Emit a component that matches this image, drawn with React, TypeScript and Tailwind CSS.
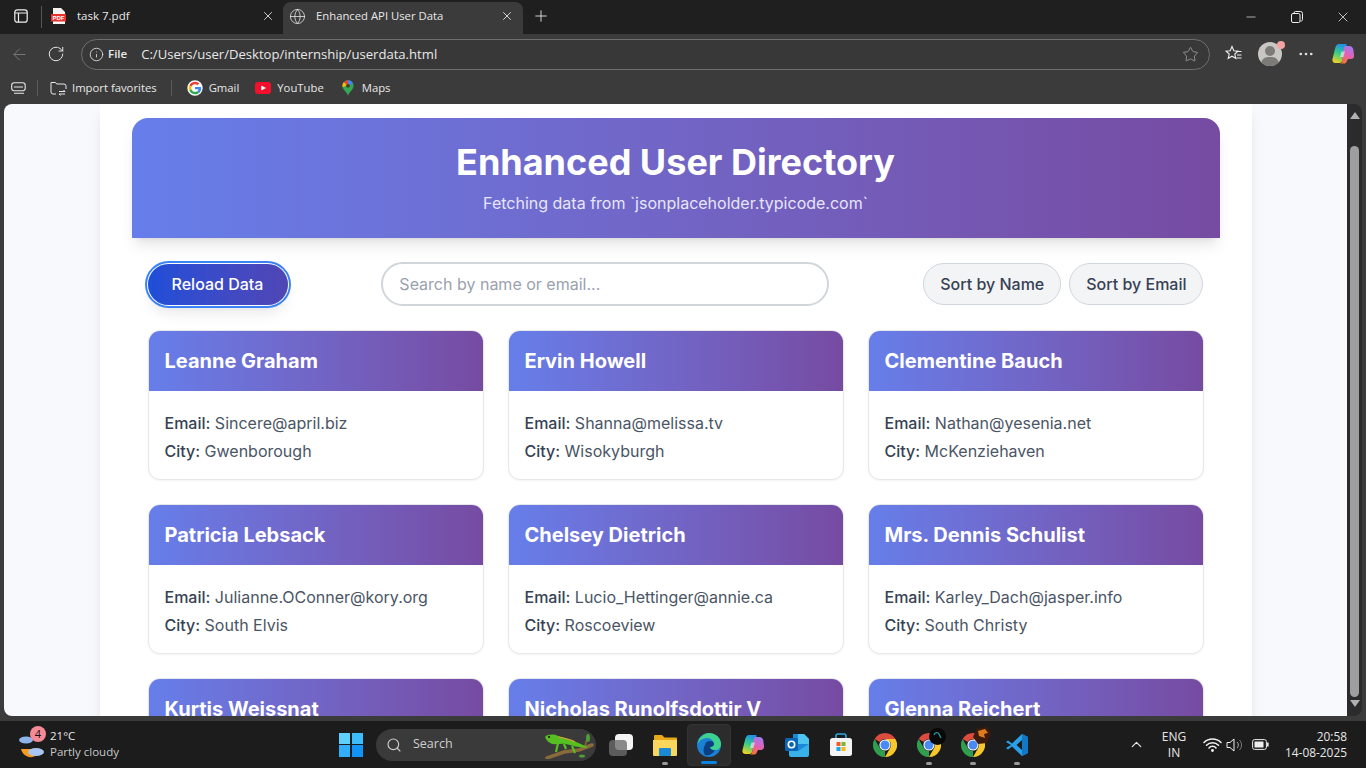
import React, { useId } from "react";
import { ArrowLeft, RotateCw, Info, Star, Search, ChevronUp, Minus, X, Plus, Globe, MoreHorizontal } from "lucide-react";

const UI = "font-['Open_Sans','Noto_Sans',sans-serif]";

const users = [
  ["Leanne Graham", "Sincere@april.biz", "Gwenborough"],
  ["Ervin Howell", "Shanna@melissa.tv", "Wisokyburgh"],
  ["Clementine Bauch", "Nathan@yesenia.net", "McKenziehaven"],
  ["Patricia Lebsack", "Julianne.OConner@kory.org", "South Elvis"],
  ["Chelsey Dietrich", "Lucio_Hettinger@annie.ca", "Roscoeview"],
  ["Mrs. Dennis Schulist", "Karley_Dach@jasper.info", "South Christy"],
  ["Kurtis Weissnat", "Telly.Hoeger@billy.biz", "Howemouth"],
  ["Nicholas Runolfsdottir V", "Sherwood@rosamond.me", "Aliyaview"],
  ["Glenna Reichert", "Chaim_McDermott@dana.io", "Bartholomebury"],
];

function Chrome({ size = 22 }: { size?: number }) {
  return (
    <svg width={size} height={size} viewBox="0 0 24 24">
      <path d="M12 0a12 12 0 0 1 10.4 6H12a6 6 0 0 0-5.200 3L1.600 6A12 12 0 0 1 12 0z" fill="#dd4b3e" />
      <path d="M22.400 6A12 12 0 0 1 12 24l5.200-9A6 6 0 0 0 17.200 9L12 6z" fill="#f8c72c" />
      <path d="M12 24A12 12 0 0 1 1.600 6l5.200 9A6 6 0 0 0 12 18z" fill="#2f9e4f" />
      <circle cx="12" cy="12" r="5.600" fill="#fff" />
      <circle cx="12" cy="12" r="4.500" fill="#4a8af4" />
    </svg>
  );
}

function Copilot({ size = 22 }: { size?: number }) {
  const id = useId();
  return (
    <svg width={size} height={size} viewBox="0 0 24 24">
      <defs>
        <linearGradient id={id + "a"} x1="0.6" y1="0" x2="0.3" y2="1">
          <stop offset="0" stopColor="#1f8fe8" />
          <stop offset="0.5" stopColor="#35cf86" />
          <stop offset="1" stopColor="#f6d21e" />
        </linearGradient>
        <linearGradient id={id + "b"} x1="0.7" y1="0" x2="0.3" y2="1">
          <stop offset="0" stopColor="#9f7cf0" />
          <stop offset="0.5" stopColor="#e35fb5" />
          <stop offset="1" stopColor="#f5742c" />
        </linearGradient>
      </defs>
      <path d="M8 2h6.500c1 0 1.300.5 1 1.500L11 19c-.5 1.500-1.500 2-3 2H4.500C2 21 1 19 1.500 17L4 7C4.500 4 6 2 8 2z" fill={`url(#${id}a)`} />
      <path d="M13 5.500c.3-1 .8-1.500 2-1.500h3.500c2 0 3.300 1.500 3.800 3.500l.7 5c.5 3-1 4.500-3 4.500h-3l-1.500 3c-.5 1-1.500 1.500-2.500 1.500H8c1.500 0 2.600-.6 3-1.800z" fill={`url(#${id}b)`} />
      <path d="M10.500 9.500h3.500l-1.600 5.500H9z" fill="#fff" fillOpacity="0.55" />
    </svg>
  );
}

function GoogleG() {
  return (
    <svg width="16" height="16" viewBox="0 0 48 48">
      <circle cx="24" cy="24" r="23" fill="#fff" />
      <path fill="#EA4335" d="M24 12.500c3.200 0 5.600 1.100 7.500 2.900l5.500-5.500C33.600 6.700 29.200 5 24 5 16.600 5 10.200 9.200 7.100 15.400l6.400 5c1.500-4.600 5.700-7.900 10.500-7.900z" />
      <path fill="#4285F4" d="M42.500 24.500c0-1.400-.1-2.400-.4-3.500H24v7h10.500c-.5 2.500-1.900 4.600-4.100 6l6.300 4.900c3.700-3.500 5.800-8.500 5.800-14.400z" />
      <path fill="#FBBC05" d="M13.500 28.600A11.600 11.600 0 0 1 13.500 20.400l-6.400-5a19 19 0 0 0 0 17.200z" />
      <path fill="#34A853" d="M24 43c5.200 0 9.500-1.700 12.700-4.600l-6.300-4.900c-1.700 1.200-3.900 2-6.400 2-4.800 0-8.900-3.200-10.500-7.900l-6.400 5C10.200 38.800 16.600 43 24 43z" />
    </svg>
  );
}

function Gecko() {
  return (
    <svg width="50" height="28" viewBox="0 0 50 28">
      <path d="M3 27 L20 21 L35 19 L48 14" stroke="#8a6a3a" strokeWidth="3.500" fill="none" strokeLinecap="round" />
      <path d="M41 15 L44 4" stroke="#8a6a3a" strokeWidth="1.500" />
      <ellipse cx="44" cy="7" rx="2" ry="4" fill="#4f9c3a" />
      <ellipse cx="38" cy="25" rx="3" ry="1.500" fill="#4f9c3a" />
      <path d="M1 6 C4 3 10 3 14 5 C20 7 26 8 32 11 C36 13 41 14 44 17 C38 16 32 16 26 14 C20 12 16 13 12 13 C8 14 3 11 1 6z" fill="#56c021" />
      <path d="M14 6 C20 7 26 8 31 11" stroke="#d9a03f" strokeWidth="1.200" fill="none" />
      <path d="M14 12 L12 21 M28 15 L31 22 M20 13 L22 18" stroke="#56c021" strokeWidth="2.200" />
      <circle cx="5" cy="6" r="1" fill="#111" />
    </svg>
  );
}

function Card({ u }: { u: string[] }) {
  return (
    <div className="rounded-xl border border-gray-200 bg-white shadow-[0_1px_2px_rgba(0,0,0,0.05)] overflow-hidden">
      <div className="h-[60px] flex items-center px-4 bg-gradient-to-r from-[#667eea] to-[#764ba2]">
        <h2 className="text-xl font-bold text-white">{u[0]}</h2>
      </div>
      <div className="px-4 pt-[18px] pb-[14px] text-base leading-7 text-gray-600">
        <p><span className="font-medium text-gray-700">Email:</span> {u[1]}</p>
        <p><span className="font-medium text-gray-700">City:</span> {u[2]}</p>
      </div>
    </div>
  );
}

function TaskIcon({ children, dot, active }: { children: React.ReactNode; dot?: boolean; active?: boolean }) {
  return (
    <div className={`relative w-11 h-[42px] flex items-center justify-center rounded ${active ? "bg-[#2c2c2c] border border-[#333]" : ""}`}>
      {children}
      {dot && <div className="absolute bottom-[1px] left-1/2 -translate-x-1/2 w-[6px] h-[3px] rounded-full bg-[#9a9a9a]" />}
      {active && <div className="absolute bottom-[1px] left-1/2 -translate-x-1/2 w-4 h-[3px] rounded-full bg-[#0a84e0]" />}
    </div>
  );
}

export default function App() {
  return (
    <div className="h-[768px] w-[1366px] overflow-hidden flex flex-col bg-[#3b3b3b] font-['Inter',sans-serif]">
      {/* tab strip */}
      <div className={`h-[34px] shrink-0 bg-[#1f1f1f] flex items-end text-[#e8e8e8] text-[11.500px] ${UI}`}>
        <div className="w-[41px] h-full flex items-center justify-center pb-[2px]">
          <svg width="14" height="14" viewBox="0 0 14 14" fill="none" stroke="#f0f0f0" strokeWidth="1.200">
            <rect x="0.800" y="0.800" width="12.400" height="12.400" rx="2.500" />
            <path d="M0.800 4h12.400M4.500 4v9" />
          </svg>
        </div>
        <div className="w-px h-[22px] bg-[#555] self-center" />
        <div className="w-[241px] h-full flex items-center pl-[9px] pr-[8px] pb-[2px]">
          <svg width="15" height="16" viewBox="0 0 15 16" className="shrink-0">
            <path d="M2 0h8l4 4v12H2z" fill="#f4f4f4" />
            <rect x="0" y="6" width="15" height="7.500" fill="#e8312f" />
            <text x="7.500" y="12" textAnchor="middle" fontSize="6" fontWeight="700" fill="#fff" fontFamily="Liberation Sans">PDF</text>
          </svg>
          <span className="ml-[11px] flex-1">task 7.pdf</span>
          <X size={14} strokeWidth={1.500} />
        </div>
        <div className="w-[240px] h-[32px] rounded-t-lg bg-[#3b3b3b] flex items-center pl-[6px] pr-[9px] pb-[4px]">
          <Globe size={17} strokeWidth={1.100} className="shrink-0" />
          <span className="ml-[10px] flex-1 text-[11.300px]">Enhanced API User Data</span>
          <X size={14} strokeWidth={1.500} />
        </div>
        <div className="w-[36px] h-full flex items-center justify-center pb-[3px]">
          <Plus size={18} strokeWidth={1.200} />
        </div>
        <div className="flex-1" />
        <div className="h-full flex items-center">
          <div className="w-[46px] flex justify-center"><Minus size={14} strokeWidth={1.200} /></div>
          <div className="w-[46px] flex justify-center">
            <svg width="12" height="12" viewBox="0 0 12 12" fill="none" stroke="#eee" strokeWidth="1">
              <rect x="0.500" y="2.500" width="8.500" height="9" rx="1.500" />
              <path d="M3 2.500V2a1.500 1.500 0 0 1 1.500-1.500h5A2 2 0 0 1 11.500 2.500v6A1.500 1.500 0 0 1 9.500 10" />
            </svg>
          </div>
          <div className="w-[46px] flex justify-center"><X size={16} strokeWidth={1.200} /></div>
        </div>
      </div>

      {/* toolbar */}
      <div className={`h-[38px] pt-[2px] shrink-0 flex items-center text-[#e8e8e8] ${UI}`}>
        <div className="w-[38px] flex justify-center"><ArrowLeft size={19} strokeWidth={1.200} className="text-[#7a7a7a]" /></div>
        <div className="w-[36px] flex justify-center"><RotateCw size={18} strokeWidth={1.300} /></div>
        <div className="ml-[7px] w-[1129px] h-[31px] rounded-full border border-[#6e6e6e] bg-[#383838] flex items-center pl-[7px] pr-[10px]">
          <Info size={15} strokeWidth={1.300} />
          <span className="ml-[4px] text-[11.500px] font-semibold">File</span>
          <span className="ml-[14px] mt-[1px] text-[13.100px] flex-1">C:/Users/user/Desktop/internship/userdata.html</span>
          <Star size={17} strokeWidth={1.100} className="text-[#a8a8a8]" />
        </div>
        <div className="w-[48px] flex justify-center">
          <svg width="18" height="18" viewBox="0 0 18 18" fill="none" stroke="#eee" strokeWidth="1.100">
            <path d="M7 1.500l1.800 4.200 4.200.4-3.200 2.900 1 4.300L7 11.200l-3.800 2.100 1-4.300L1 6.100l4.200-.4z" />
            <path d="M11.500 6.500h5M12 10h4.500M11.500 13h5" />
          </svg>
        </div>
        <div className="relative w-[24px] h-[24px] rounded-full bg-[#c9c7c3] overflow-hidden">
          <div className="absolute left-[7px] top-[4px] w-[10px] h-[10px] rounded-full bg-[#7d7b78]" />
          <div className="absolute left-[3px] top-[15px] w-[18px] h-[14px] rounded-full bg-[#7d7b78]" />
        </div>
        <div className="relative -ml-[5px] -mt-[18px] w-[8px] h-[8px] rounded-full bg-[#f5a3a3]" />
        <div className="w-[36px] ml-[3px] flex justify-center"><MoreHorizontal size={18} strokeWidth={1.500} /></div>
        <div className="w-[38px] flex justify-center"><Copilot size={24} /></div>
      </div>

      {/* favorites bar */}
      <div className={`h-[32px] shrink-0 flex items-center text-[11.300px] text-[#e8e8e8] ${UI}`}>
        <div className="w-[37px] flex justify-center">
          <svg width="16" height="12" viewBox="0 0 16 12" fill="none" stroke="#e8e8e8" strokeWidth="1.100">
            <rect x="0.700" y="0.700" width="13.500" height="8" rx="2.500" />
            <path d="M3 5h9M3 11.200h10" />
          </svg>
        </div>
        <div className="w-px h-[16px] bg-[#5a5a5a]" />
        <svg width="17" height="16" viewBox="0 0 17 16" fill="none" stroke="#e8e8e8" strokeWidth="1" className="ml-[12px]">
          <path d="M6 14H3a2 2 0 0 1-2-2V2.500h4.500l1.200 1.500H14a2 2 0 0 1 2 2v3" />
          <path d="M9 11.500h6l-1.500-1.500M15 14H9l1.500 1.500" />
        </svg>
        <span className="ml-[5px]">Import favorites</span>
        <div className="ml-[14px] w-px h-[16px] bg-[#5a5a5a]" />
        <div className="ml-[15px]"><GoogleG /></div>
        <span className="ml-[6px]">Gmail</span>
        <svg width="16" height="12" viewBox="0 0 16 12" className="ml-[16px]">
          <rect width="16" height="12" rx="3" fill="#f3102c" />
          <path d="M6.300 3.500L11 6l-4.700 2.500z" fill="#fff" />
        </svg>
        <span className="ml-[6px]">YouTube</span>
        <svg width="12" height="16" viewBox="0 0 14 18" className="ml-[18px]">
          <path d="M7 0a6.500 6.500 0 0 1 6.500 6.500C13.500 11 9 13 7 18 5 13 .5 11 .5 6.500A6.500 6.500 0 0 1 7 0z" fill="#34a853" />
          <path d="M2 2.300A6.500 6.500 0 0 1 7 0v4.500a2 2 0 0 0-1.500.7z" fill="#ea4335" />
          <path d="M7 0a6.500 6.500 0 0 1 6 4L8.500 5.200A2 2 0 0 0 7 4.500z" fill="#4285f4" />
          <path d="M2 2.300L5.500 5.200a2 2 0 0 0-.5 1.300L.8 8A6.500 6.500 0 0 1 2 2.300z" fill="#fbbc05" />
          <circle cx="7" cy="6.500" r="2.200" fill="#4a3b26" />
        </svg>
        <span className="ml-[8px]">Maps</span>
      </div>

      {/* viewport + scrollbar */}
      <div className="h-[612px] shrink-0 flex">
        <div className="ml-1 w-[1343px] h-full bg-[#f8f9fc] rounded-tl-lg rounded-bl-lg overflow-hidden">
          <div className="mx-auto w-[1152px] px-8 pt-[14px] bg-white shadow-lg min-h-full">
            <header className="h-[120px] flex flex-col items-center rounded-t-2xl bg-gradient-to-r from-[#667eea] to-[#764ba2] text-white shadow-lg pt-[21px]">
              <h1 className="text-4xl font-bold leading-[46px]">Enhanced User Directory</h1>
              <p className="mt-[6px] text-base leading-6 text-[#e6e6f8]">Fetching data from `jsonplaceholder.typicode.com`</p>
            </header>
            <div className="px-4">
              <div className="mt-6 h-11 flex items-center justify-between">
                <button className="h-[41px] w-[140px] rounded-full bg-gradient-to-r from-[#1d4ed8] to-[#4f46b5] text-white font-medium shadow-lg ring-2 ring-[#3b82f6] ring-offset-1">Reload Data</button>
                <input
                  readOnly
                  placeholder="Search by name or email..."
                  className="w-[448px] h-11 rounded-full border-2 border-gray-300 bg-white px-4 text-base placeholder:text-gray-400 outline-none"
                />
                <div className="flex gap-2">
                  <button className="h-[42px] px-4 rounded-full border border-gray-300 bg-gray-100 text-gray-700 font-medium">Sort by Name</button>
                  <button className="h-[42px] px-4 rounded-full border border-gray-300 bg-gray-100 text-gray-700 font-medium">Sort by Email</button>
                </div>
              </div>
              <div className="mt-6 grid grid-cols-3 gap-6">
                {users.map((u) => <Card key={u[0]} u={u} />)}
              </div>
            </div>
          </div>
        </div>
        <div className="w-[15px] h-full bg-[#2b2b2b] rounded-tr-lg rounded-br-lg flex flex-col items-center">
          <div className="mt-[8px] w-0 h-0 border-l-[5px] border-r-[5px] border-b-[7px] border-l-transparent border-r-transparent border-b-[#b0b0b0]" />
          <div className="mt-[27px] w-[9px] h-[551px] rounded-full bg-[#9e9e9e]" />
          <div className="mt-[3px] w-0 h-0 border-l-[5px] border-r-[5px] border-t-[7px] border-l-transparent border-r-transparent border-t-[#b0b0b0]" />
        </div>
      </div>

      <div className="h-[5px] shrink-0" />

      {/* taskbar */}
      <div className={`h-[47px] shrink-0 bg-[#1c1c1c] flex items-center text-[#e8e8e8] ${UI}`}>
        <div className="w-[329px] flex items-center pl-[18px]">
          <div className="relative w-[28px] h-[30px]">
            <svg width="28" height="30" viewBox="0 0 28 30" className="absolute left-0 top-0">
              <ellipse cx="8" cy="10" rx="7" ry="3.500" fill="#8fb4ec" />
              <path d="M3 19a10 10 0 0 0 16 6l-2-6z" fill="#f39c1f" />
              <ellipse cx="18" cy="22" rx="8" ry="4" fill="#a9c6f2" />
            </svg>
            <div className="absolute left-[12px] -top-[4px] w-4 h-4 rounded-full bg-[#f58a95] text-[#111] text-[11px] leading-4 text-center">4</div>
          </div>
          <div className="ml-[4px] -mt-[1px] text-[11.500px] leading-[16px]">
            <div>21°C</div>
            <div className="text-[#c8c8c8]">Partly cloudy</div>
          </div>
        </div>
        <div className="w-[44px] flex justify-center">
          <div className="grid grid-cols-2 gap-[1.500px] w-[24px] h-[24px]">
            <div className="bg-[#5fd0fb]" /><div className="bg-[#3cbcfb]" />
            <div className="bg-[#33aefc]" /><div className="bg-[#1293f8]" />
          </div>
        </div>
        <div className="ml-[3px] w-[220px] h-[32px] rounded-full bg-[#3a3a3a] flex items-center pl-[10px] pr-[2px] text-[12.500px] text-[#cfcfcf]">
          <Search size={16} strokeWidth={1.700} />
          <span className="ml-[11px] flex-1">Search</span>
          <Gecko />
        </div>
        <div className="ml-[3px] flex">
          <TaskIcon>
            <div className="relative w-[24px] h-[22px]">
              <div className="absolute left-[6px] top-0 w-[18px] h-[16px] rounded-sm bg-[#f4f4f4]" />
              <div className="absolute left-0 top-[6px] w-[18px] h-[16px] rounded-sm bg-[#6d6d6d]/80" />
            </div>
          </TaskIcon>
          <TaskIcon dot>
            <svg width="24" height="22" viewBox="0 0 24 22">
              <path d="M1 2a1 1 0 0 1 1-1h7l2.500 2.500H23a1 1 0 0 1 1 1V20a1 1 0 0 1-1 1H1z" fill="#e8a81b" />
              <path d="M0 6h24v15a1 1 0 0 1-1 1H1a1 1 0 0 1-1-1z" fill="#fbd65c" />
              <rect x="6" y="14" width="12" height="8" rx="1" fill="#1a8ad4" />
            </svg>
          </TaskIcon>
          <TaskIcon active>
            <svg width="26" height="26" viewBox="0 0 26 26">
              <circle cx="13" cy="13" r="12" fill="#1b7fd4" />
              <path d="M1.500 12C3 5 8 1 13 1c7 0 12 5 12 11 0 4-3 6-6 6-2.500 0-5-1-5-3 2 0 4-1 4-3 0-3-3-6-7-6S3.500 8 1.500 12z" fill="#3ed08f" />
              <path d="M9 13c0-2 2-4 5-4 2 0 4 1 4 3s-2 3-4 3c0 2 2.500 4 5 3-2 4-6 6-10 5-2-3-2-7 0-10z" fill="#0b3f80" />
            </svg>
          </TaskIcon>
          <TaskIcon><Copilot size={24} /></TaskIcon>
          <TaskIcon>
            <svg width="24" height="24" viewBox="0 0 24 24">
              <path d="M8 1h11l5 5v12a2 2 0 0 1-2 2H8z" fill="#1a8ad8" />
              <path d="M13 1h6l5 5v5h-11z" fill="#50c4f0" />
              <path d="M4 13l9 5 11-7v11a2 2 0 0 1-2 2H6a2 2 0 0 1-2-2z" fill="#38b0e8" />
              <rect x="0" y="5" width="13" height="13" rx="1.500" fill="#0c64b8" />
              <circle cx="6.500" cy="11.500" r="3.200" fill="none" stroke="#fff" strokeWidth="1.600" />
            </svg>
          </TaskIcon>
          <TaskIcon>
            <svg width="24" height="24" viewBox="0 0 24 24">
              <path d="M7 6V3a2 2 0 0 1 2-2h6a2 2 0 0 1 2 2v3" fill="none" stroke="#2fa6e0" strokeWidth="1.600" />
              <rect x="1" y="5" width="22" height="18" rx="2.500" fill="#f4f4f4" />
              <rect x="7.500" y="9" width="4" height="4" fill="#f05a28" />
              <rect x="12.500" y="9" width="4" height="4" fill="#7cb82f" />
              <rect x="7.500" y="14" width="4" height="4" fill="#1ea5e8" />
              <rect x="12.500" y="14" width="4" height="4" fill="#fdb913" />
            </svg>
          </TaskIcon>
          <TaskIcon><Chrome size={24} /></TaskIcon>
          <TaskIcon dot>
            <Chrome size={24} />
            <svg width="17" height="17" viewBox="0 0 17 17" className="absolute right-[5px] top-[4px]">
              <circle cx="8.500" cy="8.500" r="8.500" fill="#080808" />
              <path d="M5 7c1-3 4-3 5-1l2 4" stroke="#2a8f9a" strokeWidth="1.400" fill="none" />
            </svg>
          </TaskIcon>
          <TaskIcon dot>
            <Chrome size={24} />
            <svg width="18" height="17" viewBox="0 0 18 17" className="absolute right-[4px] top-[3px]">
              <path d="M4 1l10-1 4 6-4 10-9 1-5-7z" fill="#3c1a0c" />
              <path d="M5 4l7-2 3 4-4 1 1 4-6-2z" fill="#e07a1f" />
            </svg>
          </TaskIcon>
          <TaskIcon dot>
            <svg width="24" height="24" viewBox="0 0 24 24">
              <path d="M17 1l6 3v16l-6 3L7 13.500l-4 3-2-1.500 5-3-5-3 2-1.500 4 3z" fill="#2aa0ea" />
              <path d="M17 1l6 3v16l-6 3z" fill="#1178c4" />
              <path d="M17 7l-5.500 5 5.500 5z" fill="#1c1c1c" />
            </svg>
          </TaskIcon>
        </div>
        <div className="flex-1" />
        <div className="w-[230px] flex items-center text-[12px]">
          <div className="w-[36px] flex justify-center pl-[2px]"><ChevronUp size={17} strokeWidth={1.700} /></div>
          <div className="w-[42px] text-center leading-[16px]"><div>ENG</div><div>IN</div></div>
          <svg width="19" height="15" viewBox="0 0 19 15" fill="none" stroke="#f2f2f2" strokeWidth="1.500" strokeLinecap="round" className="ml-[8px]">
            <path d="M1 5.500a12 12 0 0 1 17 0M3.500 8.200a8.500 8.500 0 0 1 12 0M6 11a4.500 4.500 0 0 1 7 0" />
            <circle cx="9.500" cy="13.500" r="0.700" fill="#f2f2f2" />
          </svg>
          <svg width="18" height="16" viewBox="0 0 18 16" fill="none" stroke="#eee" strokeWidth="1" className="ml-[4px]">
            <path d="M1 5.500h3L8 2v12l-4-3.500H1z" />
            <path d="M11 5a4 4 0 0 1 0 6" stroke="#aaa" />
            <path d="M13.500 3a7 7 0 0 1 0 10" stroke="#777" />
          </svg>
          <svg width="17" height="11" viewBox="0 0 17 11" fill="none" className="ml-[8px]">
            <rect x="0.600" y="0.600" width="13.800" height="9.800" rx="2" stroke="#eee" />
            <rect x="2.500" y="2.500" width="9" height="6" fill="#eee" rx="0.500" />
            <rect x="15" y="3.500" width="1.600" height="4" fill="#eee" />
          </svg>
          <div className="flex-1 text-right -mt-[1px] leading-[16px] text-[11.900px]">
            <div>20:58</div>
            <div>14-08-2025</div>
          </div>
        </div>
        <div className="w-[19px]" />
      </div>
    </div>
  );
}
